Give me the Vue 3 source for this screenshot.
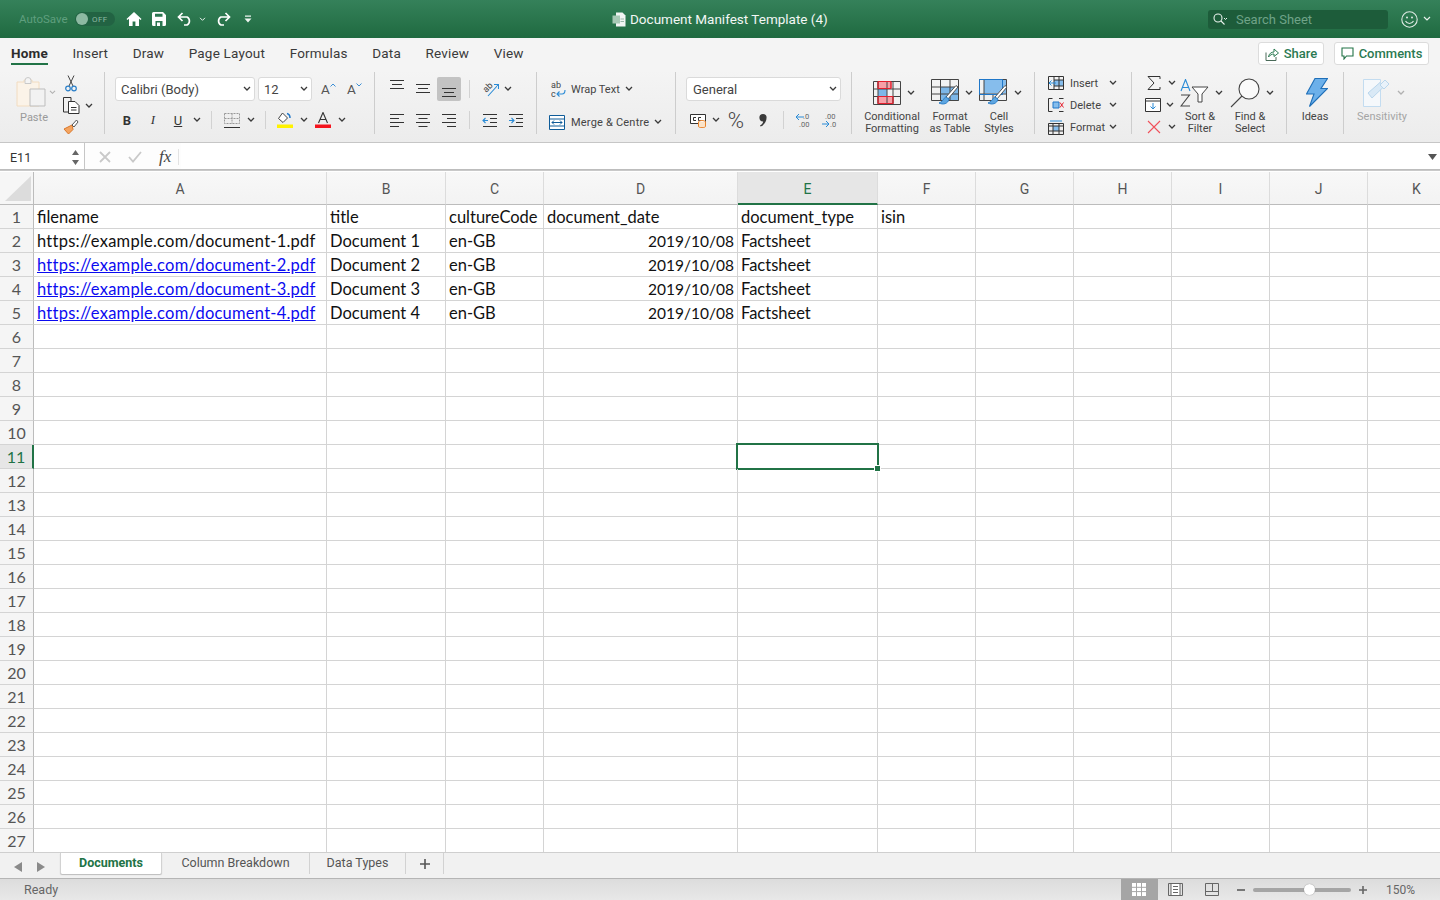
<script setup>
const tabs = ['Home', 'Insert', 'Draw', 'Page Layout', 'Formulas', 'Data', 'Review', 'View']
const columns = ['A', 'B', 'C', 'D', 'E', 'F', 'G', 'H', 'I', 'J', 'K']

const cells = {
  1: ['filename', 'title', 'cultureCode', 'document_date', 'document_type', 'isin'],
  2: ['https://example.com/document-1.pdf', 'Document 1', 'en-GB', '2019/10/08', 'Factsheet'],
  3: ['https://example.com/document-2.pdf', 'Document 2', 'en-GB', '2019/10/08', 'Factsheet'],
  4: ['https://example.com/document-3.pdf', 'Document 3', 'en-GB', '2019/10/08', 'Factsheet'],
  5: ['https://example.com/document-4.pdf', 'Document 4', 'en-GB', '2019/10/08', 'Factsheet']
}
const rows = Array.from({ length: 27 }, (_, i) => i + 1)

const cellClass = (row, col) => ({
  url: col === 0 && row >= 2 && row <= 5,
  link: col === 0 && row >= 3 && row <= 5,
  right: col === 3 && row >= 2 && row <= 5,
  active: row === 11 && col === 4
})
</script>

<template>
  <div class="app">
    <svg width="0" height="0" class="sprite">
      <symbol id="chev" viewBox="0 0 8 6"><path d="M1 1l3 3 3-3" fill="none" stroke="#3a3a3a" stroke-width="1.3" /></symbol>
      <symbol id="chevw" viewBox="0 0 8 6"><path d="M1 1l3 3 3-3" fill="none" stroke="#e8f1ec" stroke-width="1.2" /></symbol>
    </svg>

    <header class="titlebar">
      <div class="quick">
        <span class="autosave">AutoSave</span>
        <span class="toggle"><i></i><b>OFF</b></span>
        <svg width="16" height="16" viewBox="0 0 16 16" class="home"><path d="M8 1L0.5 8l1 1L3 7.8V15h3.6v-4.5h2.8V15H13V7.8L14.500 9l1-1z" fill="#fff" /></svg>
        <svg width="14" height="14" viewBox="0 0 14 14" class="save"><path d="M0 1.500A1.500 1.500 0 0 1 1.500 0H11l3 3v9.500a1.500 1.500 0 0 1-1.500 1.500h-11A1.500 1.500 0 0 1 0 12.500z" fill="#fff" /><path d="M3 1.800h7.500v3H3zM3.500 9h7v5h-7z" fill="#2a7650" /><path d="M5 10.500h3V14H5z" fill="#fff" /></svg>
        <svg width="16" height="14" viewBox="0 0 16 14" class="undo"><path d="M5.500 1L1.500 5l4 4M1.800 5H10a4.500 4.500 0 0 1 0 8H7" fill="none" stroke="#fff" stroke-width="1.700" /></svg>
        <svg width="7" height="5" class="small-chev"><use href="#chevw" /></svg>
        <svg width="16" height="14" viewBox="0 0 16 14" class="redo"><path d="M10.500 1l4 4-4 4M14.200 5H6a4.500 4.500 0 0 0 0 8h3" fill="none" stroke="#fff" stroke-width="1.700" /></svg>
        <svg width="8" height="8" viewBox="0 0 8 8" class="more"><path d="M1 0.500h6v1.200H1zM0.500 3.500h7L4 7.500z" fill="#eef5f1" /></svg>
      </div>
      <div class="doc-title">
        <svg width="14" height="15" viewBox="0 0 14 15"><path d="M4 0.500h6.500L13.500 3.500V14.500H4z" fill="#f2f5f3" /><path d="M0.500 3.500h7.500v8H0.500z" fill="#a7c9b5" /><path d="M8.500 7h3.500M8.500 9.500h3.500" stroke="#9bb8a8" /></svg>
        <span>Document Manifest Template (4)</span>
      </div>
      <div class="search">
        <svg width="15" height="13" viewBox="0 0 15 13"><circle cx="5" cy="5" r="4" fill="none" stroke="#e8f1ec" stroke-width="1.100" /><path d="M8 8l3.500 3.500" stroke="#e8f1ec" stroke-width="1.100" /><path d="M11 5l1.500 1.500L14 5" fill="none" stroke="#e8f1ec" /></svg>
        <span>Search Sheet</span>
      </div>
      <svg width="17" height="17" viewBox="0 0 17 17" class="smile"><circle cx="8.500" cy="8.500" r="7.700" fill="none" stroke="#dfeae4" stroke-width="1.100" /><circle cx="6" cy="6.500" r="1" fill="#dfeae4" /><circle cx="11" cy="6.500" r="1" fill="#dfeae4" /><path d="M4.500 10a4.500 4.500 0 0 0 8 0" fill="none" stroke="#dfeae4" stroke-width="1.100" /></svg>
      <svg width="8" height="6" class="smile-chev"><use href="#chevw" /></svg>
    </header>

    <nav class="tabbar">
      <span v-for="tab in tabs" :key="tab" :class="['tab', { current: tab === 'Home' }]">{{ tab }}</span>
      <div class="tab-actions">
        <button class="action share">
          <svg width="14" height="14" viewBox="0 0 14 14"><path d="M1 5.500v8h10V10" fill="none" stroke="#4a6a58" /><path d="M3.500 10C4 6.500 6.500 5 9 5V2l4.500 4L9 9.500V7C7 7 5 8 3.500 10z" fill="none" stroke="#2b7a52" /></svg>
          Share
        </button>
        <button class="action comments">
          <svg width="13" height="13" viewBox="0 0 13 13"><path d="M1 1h11v8H5.500L3 12V9H1z" fill="none" stroke="#217346" stroke-width="1.100" /></svg>
          Comments
        </button>
      </div>
    </nav>

    <section class="ribbon">
      <!-- clipboard -->
      <div class="group clipboard">
        <div class="paste">
          <div class="paste-top">
            <svg width="30" height="30" viewBox="0 0 30 30">
              <path d="M1 5h7V3h8v2h7v24H1z" fill="#fbf3e8" stroke="#f2dcc0" />
              <path d="M9 3.500a3 3 0 0 1 6 0v3H9z" fill="#f4f4f4" stroke="#c9c9c9" />
              <path d="M14 12h15v17H14z" fill="#f2f2f2" stroke="#bdbdbd" />
            </svg>
            <svg width="7" height="5" class="chev-faded"><use href="#chev" /></svg>
          </div>
          <span class="paste-label">Paste</span>
        </div>
        <div class="clip-tools">
          <svg width="12" height="17" viewBox="0 0 12 17"><path d="M3 0.500L8 11M9 0.500L4 11" stroke="#444" fill="none" /><circle cx="3" cy="13.500" r="2.300" fill="none" stroke="#2a7fc9" stroke-width="1.200" /><circle cx="9" cy="13.500" r="2.300" fill="none" stroke="#2a7fc9" stroke-width="1.200" /></svg>
          <div class="tool-line">
            <svg width="17" height="17" viewBox="0 0 17 17"><path d="M0.500 0.500H8V4M5 15H0.500V0.500" fill="none" stroke="#333" /><path d="M5.500 4.500h6.500l4 4v8h-10.500z" fill="#fff" stroke="#333" /><path d="M8 10.500h5.500M8 13h5.500" stroke="#333" /></svg>
            <svg width="8" height="6" class="chev"><use href="#chev" /></svg>
          </div>
          <svg width="16" height="16" viewBox="0 0 16 16"><path d="M9 6l-8 4 4.500 5 4.500-4.500z" fill="#f4a460" stroke="#d9772a" /><path d="M9 6l2 2 4-5-1.500-2z" fill="#fff" stroke="#555" /></svg>
        </div>
      </div>

      <!-- font -->
      <div class="group rows font">
        <div class="row">
          <div class="select font-name">Calibri (Body)<svg width="8" height="6"><use href="#chev" /></svg></div>
          <div class="select font-size">12<svg width="8" height="6"><use href="#chev" /></svg></div>
          <span class="grow-a">A<svg width="6" height="4" viewBox="0 0 6 4"><path d="M0.500 3.500L3 1l2.500 2.500" fill="none" stroke="#3b8fd6" /></svg></span>
          <span class="grow-a">A<svg width="6" height="4" viewBox="0 0 6 4"><path d="M0.500 0.500L3 3l2.500-2.500" fill="none" stroke="#3b8fd6" /></svg></span>
        </div>
        <div class="row font-tools">
          <span class="fmt bold">B</span>
          <span class="fmt italic">I</span>
          <span class="fmt under">U</span>
          <svg width="8" height="6" class="chev under-chev"><use href="#chev" /></svg>
          <i class="vsep sep-a"></i>
          <svg width="16" height="15" viewBox="0 0 16 15" class="borders"><path d="M0.500 0.500h15v10h-15zM8 0.500v10M0.500 5.500h15" fill="none" stroke="#999" stroke-dasharray="2 1" /><path d="M0 14.500h16" stroke="#333" /></svg>
          <svg width="8" height="6" class="chev borders-chev"><use href="#chev" /></svg>
          <i class="vsep sep-b"></i>
          <svg width="16" height="16" viewBox="0 0 16 16" class="fill"><path d="M5.500 1L1.500 6.500 6 10.500l4.500-4.500z" fill="#fff" stroke="#444" /><path d="M10 1.500c2 .5 3 2 3 4.500" fill="none" stroke="#1f77c9" stroke-width="1.500" /><path d="M0 12.500h16V16H0z" fill="#fff200" /></svg>
          <svg width="8" height="6" class="chev fill-chev"><use href="#chev" /></svg>
          <svg width="16" height="16" viewBox="0 0 16 16" class="colour"><path d="M3.500 11L8 0.500 12.500 11M5 7.500h6" fill="none" stroke="#333" stroke-width="1.100" /><path d="M0 12.500h16V16H0z" fill="#f5141e" /></svg>
          <svg width="8" height="6" class="chev colour-chev"><use href="#chev" /></svg>
        </div>
      </div>

      <!-- alignment -->
      <div class="group rows align">
        <div class="row">
          <span class="al"><svg width="14" height="10" viewBox="0 0 14 10" class="up"><path d="M0 0.500h14M2 4.500h10M0 8.500h14" stroke="#333" /></svg></span>
          <span class="al"><svg width="14" height="10" viewBox="0 0 14 10"><path d="M0 0.500h14M2 4.500h10M0 8.500h14" stroke="#333" /></svg></span>
          <span class="al on"><svg width="14" height="10" viewBox="0 0 14 10" class="down"><path d="M0 0.500h14M2 4.500h10M0 8.500h14" stroke="#333" /></svg></span>
          <i class="vsep al-sep"></i>
          <svg width="17" height="16" viewBox="0 0 17 16" class="orient"><text x="1" y="10" transform="rotate(-45 5 7)" class="svg-ab">ab</text><path d="M6 15L16 4M12 3.500h4.500V8" fill="none" stroke="#2a8bd6" stroke-width="1.100" /></svg>
          <svg width="8" height="6" class="chev orient-chev"><use href="#chev" /></svg>
        </div>
        <div class="row">
          <span class="al"><svg width="14" height="13" viewBox="0 0 14 13"><path d="M0 .5h14M0 4.500h9M0 8.500h14M0 12.500h9" stroke="#333" /></svg></span>
          <span class="al"><svg width="14" height="13" viewBox="0 0 14 13"><path d="M0 .5h14M2.500 4.500h9M0 8.500h14M2.500 12.500h9" stroke="#333" /></svg></span>
          <span class="al"><svg width="14" height="13" viewBox="0 0 14 13"><path d="M0 .5h14M5 4.500h9M0 8.500h14M5 12.500h9" stroke="#333" /></svg></span>
          <i class="vsep al-sep"></i>
          <svg width="15" height="13" viewBox="0 0 15 13" class="indent"><path d="M1 .5h14M8 4.500h7M8 8.500h7M1 12.500h14" stroke="#333" /><path d="M6 6.500H1M3.500 4L1 6.500 3.500 9" fill="none" stroke="#2a8bd6" stroke-width="1.100" /></svg>
          <svg width="15" height="13" viewBox="0 0 15 13" class="indent"><path d="M1 .5h14M8 4.500h7M8 8.500h7M1 12.500h14" stroke="#333" /><path d="M1 6.500h5M3.500 4L6 6.500 3.500 9" fill="none" stroke="#2a8bd6" stroke-width="1.100" /></svg>
        </div>
      </div>

      <!-- wrap -->
      <div class="group rows wrap">
        <div class="row wrap-row">
          <svg width="15" height="17" viewBox="0 0 15 17"><text x="0" y="7" class="svg-ab">ab</text><text x="0" y="15.500" class="svg-ab">c</text><path d="M14 9c0 3-1 4-3 4H6M8.500 10.500L6 13l2.500 2.500" fill="none" stroke="#2a8bd6" stroke-width="1.100" /></svg>
          <span class="wrap-label">Wrap Text</span>
          <svg width="8" height="6" class="chev"><use href="#chev" /></svg>
        </div>
        <div class="row merge-row">
          <svg width="16" height="15" viewBox="0 0 16 15"><path d="M.5.500h15v14H.5z" fill="#fff" stroke="#0f5c99" /><path d="M.5 4h15M.5 11h15" stroke="#0f5c99" /><path d="M3 7.500h10M5 5.500l-2 2 2 2M11 5.500l2 2-2 2" fill="none" stroke="#0f5c99" /></svg>
          <span class="merge-label">Merge &amp; Centre</span>
          <svg width="8" height="6" class="chev"><use href="#chev" /></svg>
        </div>
      </div>

      <!-- number -->
      <div class="group rows number">
        <div class="row">
          <div class="select number-format">General<svg width="8" height="6"><use href="#chev" /></svg></div>
        </div>
        <div class="row number-tools">
          <svg width="16" height="15" viewBox="0 0 16 15" class="currency"><path d="M.5 1.500h15v9H.5z" fill="#fff" stroke="#333" /><path d="M6 4.500H3.500v3H6M11 4.500H8.500v3H11" fill="none" stroke="#333" /><ellipse cx="12" cy="9" rx="3.500" ry="1.500" fill="#fff" stroke="#e9832a" /><path d="M8.500 9v4.500c0 1.500 7 1.500 7 0V9" fill="#fbe3c8" stroke="#e9832a" /></svg>
          <svg width="8" height="6" class="chev cur-chev"><use href="#chev" /></svg>
          <span class="percent">%</span>
          <svg width="8" height="13" viewBox="0 0 8 13" class="comma"><path d="M4 0a3.600 3.600 0 0 1 3.600 3.600c0 4-2.500 7.500-6 9l-.6-1c1.800-1 3-2.500 3.200-4.200A3.500 3.500 0 1 1 4 0z" fill="#3a3a3a" /></svg>
          <i class="vsep num-sep"></i>
          <svg width="16" height="15" viewBox="0 0 16 15" class="dec"><text x="8" y="6" class="svg-dec">.0</text><text x="4" y="13.500" class="svg-dec">.00</text><path d="M9 4H1M4 1L1 4l3 3" fill="none" stroke="#2a8bd6" /></svg>
          <svg width="16" height="15" viewBox="0 0 16 15" class="dec"><text x="4" y="6" class="svg-dec">.00</text><text x="9" y="13.500" class="svg-dec">.0</text><path d="M1 11h7M5 8l3 3-3 3" fill="none" stroke="#2a8bd6" /></svg>
        </div>
      </div>

      <!-- styles -->
      <div class="group styles">
        <div class="big cond">
          <div class="big-top">
            <svg width="28" height="24" viewBox="0 0 28 24">
              <path d="M5 .5h13v7H5z" fill="#f7a0a7" stroke="#e5202e" />
              <path d="M5 8h9v7H5z" fill="#7db7e8" />
              <path d="M5 15.500h15v7H5z" fill="#f7a0a7" stroke="#e5202e" />
              <path d="M.5.500h27v23H.5zM.5 8h27M.5 15.500h27M5 .5v23M14 .5v23M20 .5v23" fill="none" stroke="#444" />
              <path d="M5 .5h13v7H5zM5 15.500h15v7H5z" fill="none" stroke="#e5202e" />
            </svg>
            <svg width="8" height="6"><use href="#chev" /></svg>
          </div>
          <div class="big-label">Conditional<br>Formatting</div>
        </div>
        <div class="big fmt-table">
          <div class="big-top">
            <svg width="28" height="27" viewBox="0 0 28 27">
              <path d="M9 8h19v14H9z" fill="#7db7e8" />
              <path d="M.5.500h27v21H.5zM.5 8h27M.5 15h27M9.500.5v21M19 .5v21" fill="none" stroke="#444" />
              <path d="M27 8L17 20l-2-2L25 6.500z" fill="#fff" stroke="#555" />
              <path d="M15 18c-2 0-2 4-7 6 4 2 9 1 10-4z" fill="#5da5e0" stroke="#2a7fc9" />
            </svg>
            <svg width="8" height="6"><use href="#chev" /></svg>
          </div>
          <div class="big-label">Format<br>as Table</div>
        </div>
        <div class="big cell-styles">
          <div class="big-top">
            <svg width="29" height="27" viewBox="0 0 29 27">
              <path d="M5 .5h23v14H5z" fill="#86bdec" />
              <path d="M.5.500h27v21H.5zM.5 15h27M5 .5v21M14 15v6.500" fill="none" stroke="#444" />
              <path d="M.5.500h23v15H.5z" fill="none" stroke="#1f77c9" />
              <path d="M28 8L18 20l-2-2L26 6.500z" fill="#fff" stroke="#555" />
              <path d="M16 18c-2 0-2 4-7 6 4 2 9 1 10-4z" fill="#5da5e0" stroke="#2a7fc9" />
            </svg>
            <svg width="8" height="6"><use href="#chev" /></svg>
          </div>
          <div class="big-label">Cell<br>Styles</div>
        </div>
      </div>

      <!-- cells -->
      <div class="group cells">
        <div class="cell-line">
          <svg width="16" height="14" viewBox="0 0 16 14"><path d="M6 4h9.500v6H6z" fill="#86bdec" /><path d="M.5.500h15v13H.5zM6 4h9.500M6 10h9.500M6 .5v13M11 .5v13" fill="none" stroke="#333" /><path d="M8 7H1M3.500 4.500L1 7l2.500 2.500" fill="none" stroke="#2a8bd6" /></svg>
          <span>Insert</span>
          <svg width="8" height="6"><use href="#chev" /></svg>
        </div>
        <div class="cell-line">
          <svg width="16" height="14" viewBox="0 0 16 14"><path d="M5 4h6v6H5z" fill="#86bdec" stroke="#1f77c9" /><path d="M.5.500h4M11 .5h4.500M.5 13.500h4M11 13.500h4.500M.5.500v13" fill="none" stroke="#333" /><path d="M12 4.500l3.500 5M15.500 4.500l-3.500 5" stroke="#e5202e" /></svg>
          <span>Delete</span>
          <svg width="8" height="6"><use href="#chev" /></svg>
        </div>
        <div class="cell-line">
          <svg width="16" height="15" viewBox="0 0 16 15"><path d="M5 6h6v5H5z" fill="#86bdec" /><path d="M.5 3.500h15v11H.5zM.5 6h15M.5 11h15M5 3.500v11M11 3.500v11" fill="none" stroke="#333" /><path d="M2 1h12" stroke="#2a8bd6" /></svg>
          <span>Format</span>
          <svg width="8" height="6"><use href="#chev" /></svg>
        </div>
      </div>

      <!-- editing -->
      <div class="group editing">
        <div class="edit-tools">
          <div class="edit-line">
            <svg width="14" height="14" viewBox="0 0 14 14"><path d="M13 3V.5H1L7 7l-6 6.500h12V11" fill="none" stroke="#333" /></svg>
            <svg width="8" height="6"><use href="#chev" /></svg>
          </div>
          <div class="edit-line">
            <svg width="16" height="14" viewBox="0 0 16 14"><path d="M.5.500h15v13H.5z" fill="#fff" stroke="#333" /><path d="M.5 3h15" stroke="#333" /><path d="M8 5v6M5.500 8.500L8 11l2.500-2.500" fill="none" stroke="#2a8bd6" /></svg>
            <svg width="8" height="6"><use href="#chev" /></svg>
          </div>
          <div class="edit-line">
            <svg width="14" height="14" viewBox="0 0 14 14"><path d="M1 1l12 12M13 1L1 13" stroke="#f0505a" stroke-width="1.100" /></svg>
            <svg width="8" height="6"><use href="#chev" /></svg>
          </div>
        </div>
        <div class="big sort">
          <div class="big-top">
            <svg width="29" height="28" viewBox="0 0 29 28">
              <path d="M1 12L5.500.5 10 12M2.500 8.500h6" fill="none" stroke="#2a8bd6" stroke-width="1.100" />
              <path d="M1 16h8.500L1 27h9" fill="none" stroke="#444" stroke-width="1.100" />
              <path d="M12 8h16l-6 7v8h-4v-8z" fill="#fff" stroke="#444" />
            </svg>
            <svg width="8" height="6"><use href="#chev" /></svg>
          </div>
          <div class="big-label">Sort &amp;<br>Filter</div>
        </div>
        <div class="big find">
          <div class="big-top">
            <svg width="30" height="30" viewBox="0 0 30 30">
              <circle cx="19" cy="11" r="10" fill="#fafafa" stroke="#444" stroke-width="1.100" />
              <path d="M12 18L1 29" stroke="#444" stroke-width="1.100" />
            </svg>
            <svg width="8" height="6"><use href="#chev" /></svg>
          </div>
          <div class="big-label">Find &amp;<br>Select</div>
        </div>
      </div>

      <!-- ideas -->
      <div class="group ideas">
        <div class="big">
          <div class="big-top">
            <svg width="22" height="29" viewBox="0 0 22 29"><path d="M9 .5h12.500L15 10.500h6.500L3.500 28.500 8 16H.5z" fill="#6cb0ea" stroke="#1f6fb8" stroke-width="1.100" /></svg>
          </div>
          <div class="big-label">Ideas</div>
        </div>
      </div>

      <!-- sensitivity -->
      <div class="group sensitivity">
        <div class="big">
          <div class="big-top">
            <svg width="28" height="29" viewBox="0 0 28 29">
              <path d="M.5 1.500h17v27H.5z" fill="#f5f8fb" stroke="#c3dcf0" />
              <path d="M5 15L17 4.500l4 4L9 20z" fill="#d9e9f6" stroke="#b9d6ec" />
              <path d="M17 7l5-5 4 4-5 5z" fill="#e9f2fa" stroke="#b9d6ec" />
            </svg>
            <svg width="8" height="6" class="chev-faded"><use href="#chev" /></svg>
          </div>
          <div class="big-label faded">Sensitivity</div>
        </div>
      </div>
    </section>

    <div class="formula-bar">
      <div class="name-box">
        <span>E11</span>
        <svg width="9" height="17" viewBox="0 0 9 17"><path d="M4.500 1L8 6H1zM4.500 16L1 11h7z" fill="#666" /></svg>
      </div>
      <div class="formula-tools">
        <svg width="12" height="12" viewBox="0 0 12 12"><path d="M1 1l10 10M11 1L1 11" stroke="#c9c9c9" stroke-width="1.800" /></svg>
        <svg width="14" height="12" viewBox="0 0 14 12"><path d="M1 6l4 4.500L13 1" fill="none" stroke="#c9c9c9" stroke-width="1.800" /></svg>
        <span class="fx">fx</span>
      </div>
      <div class="formula-input"></div>
      <svg width="9" height="6" viewBox="0 0 9 6" class="formula-drop"><path d="M0 0h9L4.500 6z" fill="#555" /></svg>
    </div>

    <main class="sheet">
      <div class="corner"><i></i></div>
      <div
        v-for="col in columns"
        :key="col"
        :class="['col-head', { selected: col === 'E' }]"
      >{{ col }}</div>
      <template v-for="row in rows" :key="row">
        <div :class="['row-head', { selected: row === 11 }]">{{ row }}</div>
        <div
          v-for="(col, i) in columns"
          :key="col"
          :class="['cell', cellClass(row, i)]"
        >{{ cells[row] ? cells[row][i] : '' }}</div>
      </template>
    </main>

    <div class="sheet-tabs">
      <div class="arrows">
        <svg width="8" height="10" viewBox="0 0 8 10"><path d="M8 0v10L0 5z" fill="#8a8a8a" /></svg>
        <svg width="8" height="10" viewBox="0 0 8 10"><path d="M0 0v10l8-5z" fill="#8a8a8a" /></svg>
      </div>
      <span class="stab current">Documents</span>
      <span class="stab breakdown">Column Breakdown</span>
      <span class="stab types">Data Types</span>
      <span class="stab plus">
        <svg width="10" height="10" viewBox="0 0 10 10"><path d="M5 0v10M0 5h10" stroke="#555" stroke-width="1.600" /></svg>
      </span>
    </div>

    <footer class="status">
      <span class="ready">Ready</span>
      <div class="views">
        <span class="view on"><svg width="14" height="13" viewBox="0 0 14 13"><path d="M0 0h14v13H0z" fill="#fff" /><path d="M4.500 0v13M9.500 0v13M0 4.300h14M0 8.600h14" stroke="#a5a5a5" /></svg></span>
        <span class="view"><svg width="15" height="13" viewBox="0 0 15 13"><path d="M.5.500h14v12H.5z" fill="none" stroke="#666" /><path d="M3 .5h9v12H3z" fill="#fff" stroke="#666" /><path d="M5 3.500h5M5 6.500h5M5 9.500h5" stroke="#666" /></svg></span>
        <span class="view"><svg width="14" height="13" viewBox="0 0 14 13"><path d="M.5.500h13v12H.5zM.5 8.500h13M7.500.5v8" fill="none" stroke="#666" /></svg></span>
      </div>
      <svg width="8" height="2" class="zoom-minus"><path d="M0 1h8" stroke="#777" stroke-width="2" /></svg>
      <div class="slider"><i></i></div>
      <svg width="8" height="8" class="zoom-plus"><path d="M4 0v8M0 4h8" stroke="#666" stroke-width="1.600" /></svg>
      <span class="zoom-val">150%</span>
    </footer>
  </div>
</template>

<style>
html, body {
  margin: 0;
  background: #fff;
  overflow: hidden;
}
</style>

<style scoped>
.app {
  width: 1440px;
  height: 900px;
  overflow: hidden;
  display: flex;
  flex-direction: column;
  font-family: Roboto, "Liberation Sans", sans-serif;
  color: #333;
}
.sprite {
  position: absolute;
}
svg {
  display: block;
  flex: none;
}
.svg-ab {
  font: 9px Roboto, sans-serif;
  fill: #444;
}
.svg-dec {
  font: 7.500px Roboto, sans-serif;
  fill: #666;
}

/* title bar */
.titlebar {
  height: 38px;
  flex: none;
  display: flex;
  align-items: center;
  background: linear-gradient(#35815a, #1f6a40);
  color: #fff;
  position: relative;
}
.quick {
  display: flex;
  align-items: center;
  padding-left: 19px;
}
.autosave {
  font-size: 11.5px;
  color: #5f9f7e;
  width: 56px;
}
.toggle {
  width: 40px;
  height: 14px;
  border-radius: 7px;
  background: #226343;
  display: flex;
  align-items: center;
  gap: 4px;
}
.toggle i {
  width: 12px;
  height: 12px;
  border-radius: 50%;
  background: #8db9a2;
  margin-left: 1px;
}
.toggle b {
  font-size: 8px;
  font-weight: 400;
  color: #8db9a2;
  letter-spacing: 0.4px;
}
.home { margin-left: 11px; }
.save { margin-left: 10px; }
.undo { margin-left: 11px; }
.small-chev { margin-left: 6px; }
.redo { margin-left: 9px; }
.more { margin-left: 13px; }
.doc-title {
  position: absolute;
  left: 612px;
  top: 11px;
  display: flex;
  align-items: center;
  gap: 4px;
  font-size: 13.500px;
  color: #f2f7f4;
}
.search {
  margin-left: auto;
  width: 180px;
  height: 19px;
  background: #1d5c3a;
  border-radius: 3px;
  display: flex;
  align-items: center;
  gap: 8px;
  padding-left: 5px;
  box-sizing: border-box;
  font-size: 13px;
  color: #6fa388;
}
.smile { margin-left: 13px; }
.smile-chev { margin: 0 9px 0 5px; }

/* tabs */
.tabbar {
  height: 32px;
  flex: none;
  background: #f4f4f4;
  display: flex;
  align-items: center;
  padding-left: 11px;
  gap: 24.500px;
  font-size: 13.500px;
  letter-spacing: 0.2px;
  position: relative;
}
.tab {
  color: #3a3a3a;
  align-self: flex-start;
  height: 21px;
  line-height: 22px;
  margin-top: 4px;
  border-bottom: 2px solid transparent;
}
.tab.current {
  font-weight: 700;
  color: #2c2c2c;
  border-color: #217346;
}
.tab-actions {
  margin: -1px 0 0 auto;
  display: flex;
  gap: 10px;
  padding-right: 11px;
}
.action {
  height: 23px;
  box-sizing: border-box;
  background: #fff;
  border: 1px solid #dcdcdc;
  border-radius: 3px;
  display: flex;
  align-items: center;
  justify-content: center;
  gap: 5px;
  font: 500 13px Roboto, sans-serif;
  color: #2b7a52;
  padding: 0;
}
.share { width: 66px; }
.comments { width: 95px; }

/* ribbon */
.ribbon {
  height: 73px;
  flex: none;
  box-sizing: border-box;
  background: linear-gradient(#f4f4f4, #ececec);
  border-bottom: 1px solid #c6c6c6;
  display: flex;
  padding-top: 2px;
  font-size: 11px;
  color: #444;
}
.group {
  height: 62px;
  box-sizing: border-box;
  border-right: 1px solid #cdcdcd;
  flex: none;
}
.rows {
  display: flex;
  flex-direction: column;
  gap: 7px;
  padding-top: 5px;
}
.row {
  height: 24px;
  display: flex;
  align-items: center;
}
.chev { margin-left: 5px; }
.chev-faded { opacity: 0.35; }

.clipboard {
  width: 105px;
  display: flex;
  padding-left: 16px;
}
.paste {
  width: 47px;
  display: flex;
  flex-direction: column;
}
.paste-top {
  display: flex;
  align-items: center;
  gap: 3px;
  margin-top: 5px;
  height: 30px;
}
.paste-label {
  width: 36px;
  text-align: center;
  color: #9a9a9a;
  margin-top: 4px;
  line-height: 13px;
}
.clip-tools {
  display: flex;
  flex-direction: column;
  gap: 5px;
  padding-top: 3px;
}
.tool-line {
  display: flex;
  align-items: center;
}
.clip-tools > svg:first-child { margin-left: 2px; }

.font {
  width: 270px;
  padding-left: 10px;
}
.select {
  height: 24px;
  box-sizing: border-box;
  background: #fff;
  border: 1px solid #dadada;
  border-radius: 3px;
  display: flex;
  align-items: center;
  justify-content: space-between;
  padding: 0 3px 0 5px;
  font-size: 13px;
  color: #444;
}
.font-name { width: 140px; }
.font-size { width: 54px; margin-left: 3px; }
.grow-a {
  display: flex;
  align-items: flex-start;
  width: 26px;
  font-size: 13.500px;
  color: #555;
}
.font-size + .grow-a { margin-left: 9px; }
.grow-a svg { margin-top: 2px; }
.font-tools { padding-left: 7px; }
.fmt {
  font: 13px "Liberation Serif", serif;
  color: #333;
  width: 10px;
  text-align: center;
}
.bold { font: 700 13px Roboto, sans-serif; }
.italic { margin-left: 16px; font-style: italic; }
.under {
  font: 13px Roboto, sans-serif;
  text-decoration: underline;
  margin-left: 15px;
}
.under-chev { margin-left: 10px; }
.vsep {
  width: 1px;
  height: 18px;
  background: #d2d2d2;
  flex: none;
}
.sep-a { margin-left: 10px; }
.borders { margin-left: 12px; }
.borders-chev { margin-left: 7px; }
.sep-b { margin-left: 10px; }
.fill { margin-left: 11px; }
.fill-chev { margin-left: 7px; }
.colour { margin-left: 7px; }
.colour-chev { margin-left: 7px; }

.align {
  width: 162px;
  padding-left: 10px;
}
.al {
  width: 24px;
  height: 24px;
  margin-right: 2px;
  border-radius: 2px;
  display: flex;
  align-items: center;
  justify-content: center;
}
.al.on { background: #c3c3c3; }
.up { margin-bottom: 8px; }
.down { margin-top: 8px; }
.al-sep { margin-left: 6px; }
.orient { margin-left: 12px; }
.orient-chev { margin-left: 5px; }
.indent { margin-left: 12px; margin-right: -1px; }
.indent + .indent { margin-left: 12px; }

.wrap { width: 139px; }
.wrap-row { padding-left: 14px; }
.wrap-label { margin-left: 5px; }
.merge-row { padding: 2px 0 0 12px; }
.merge-label { margin-left: 6px; letter-spacing: 0.2px; }

.number {
  width: 176px;
  padding-left: 10px;
}
.number-format { width: 155px; padding-left: 6px; }
.number-tools { padding-left: 4px; }
.cur-chev { margin-left: 6px; }
.percent {
  font-size: 22px;
  font-weight: 300;
  color: #444;
  margin-left: 7px;
  width: 18px;
  text-align: center;
}
.comma { margin-left: 14px; }
.num-sep { margin-left: 16px; }
.dec { margin-left: 11px; }
.dec + .dec { margin-left: 10px; }

.big {
  display: flex;
  flex-direction: column;
  align-items: center;
  flex: none;
}
.big-top {
  height: 39px;
  flex: none;
  display: flex;
  align-items: center;
  justify-content: center;
  gap: 6px;
  padding: 2px 0 0 3px;
  box-sizing: border-box;
  align-self: stretch;
}
.big-label {
  text-align: center;
  line-height: 12px;
  font-size: 11px;
  color: #444;
  white-space: nowrap;
}
.big-label.faded { color: #a5a5a5; }

.styles {
  width: 183px;
  display: flex;
  padding-left: 10px;
}
.cond { width: 60px; }
.fmt-table { width: 50px; margin-left: 3px; }
.cell-styles { width: 46px; margin-left: 1px; }

.cells {
  width: 97px;
  padding: 0 0 0 13px;
  display: flex;
  flex-direction: column;
}
.cell-line {
  height: 22px;
  flex: none;
  display: flex;
  align-items: center;
  font-size: 11px;
}
.cell-line span { margin-left: 6px; width: 39px; }

.editing {
  width: 155px;
  display: flex;
  padding-left: 13px;
}
.edit-tools {
  width: 33px;
  display: flex;
  flex-direction: column;
}
.edit-line {
  height: 22px;
  flex: none;
  display: flex;
  align-items: center;
  gap: 5px;
}
.edit-line:first-child svg:first-child,
.edit-line:last-child svg:first-child {
  margin: 0 2px;
}
.sort { width: 44px; }
.find { width: 50px; margin-left: 3px; }
.ideas {
  width: 57px;
  display: flex;
  justify-content: center;
}
.ideas .big { width: 40px; }
.sensitivity {
  border-right: 0;
  padding-left: 13px;
  flex: 1;
}
.sensitivity .big { width: 50px; }

/* formula bar */
.formula-bar {
  height: 27px;
  flex: none;
  background: #fff;
  display: flex;
  align-items: center;
  border-bottom: 1px solid #bdbdbd;
  box-sizing: border-box;
}
.name-box {
  width: 85px;
  height: 26px;
  box-sizing: border-box;
  border-right: 1px solid #c6c6c6;
  display: flex;
  align-items: center;
  justify-content: space-between;
  padding: 2px 4px 0 10px;
  font-size: 12.500px;
  color: #333;
}
.formula-tools {
  display: flex;
  align-items: center;
  width: 96px;
  height: 26px;
  padding: 2px 0 0 14px;
  box-sizing: border-box;
  gap: 17px;
  background: #fdfdfd;
}
.fx {
  font: italic 17px "Liberation Serif", serif;
  color: #444;
  border-right: 1px solid #e3e3e3;
  padding-right: 7px;
  line-height: 16px;
}
.formula-input { flex: 1; }
.formula-drop { margin: 1px 3px 0 0; }

/* sheet */
.sheet {
  height: 682px;
  flex: none;
  box-sizing: border-box;
  padding-top: 1px;
  border-top: 1px solid #c9c9c9;
  overflow: hidden;
  display: grid;
  grid-template-columns: 34px 293px 119px 98px 194px 140px 98px 98px 98px 98px 98px 98px;
  grid-template-rows: 33px repeat(27, 24px);
  font-family: Lato, sans-serif;
  font-size: 16.500px;
  color: #111;
}
.corner {
  border-right: 1px solid #bcbcbc;
  border-bottom: 1px solid #bcbcbc;
  background: #f6f6f6;
  position: relative;
}
.corner i {
  position: absolute;
  left: 5px;
  bottom: 3px;
  border-left: 26px solid transparent;
  border-bottom: 25px solid #dcdcdc;
}
.col-head {
  background: linear-gradient(#f8f8f8, #f3f3f3);
  border-right: 1px solid #dcdcdc;
  border-bottom: 1px solid #bcbcbc;
  display: flex;
  align-items: center;
  justify-content: center;
  padding-top: 2px;
  box-sizing: border-box;
  font: 14px Roboto, sans-serif;
  color: #555;
}
.col-head.selected {
  background: #e6e6e6;
  color: #217346;
  border-bottom: 2px solid #217346;
}
.row-head {
  background: #f5f5f5;
  border-right: 1px solid #bcbcbc;
  border-bottom: 1px solid #d4d4d4;
  display: flex;
  align-items: flex-end;
  justify-content: center;
  line-height: 23px;
  font-size: 16px;
  color: #555;
}
.row-head.selected {
  background: #e6e6e6;
  color: #217346;
  border-right: 2px solid #217346;
}
.cell {
  border-right: 1px solid #d4d4d4;
  border-bottom: 1px solid #d4d4d4;
  padding: 0 3px;
  line-height: 24px;
  white-space: nowrap;
  position: relative;
}
.cell.url { letter-spacing: 0.24px; }
.cell.link {
  color: #0b0bf0;
  text-decoration: underline;
}
.cell.right {
  text-align: right;
  font-size: 15.500px;
}
.cell.active::after {
  content: "";
  position: absolute;
  left: -2px;
  top: -2px;
  right: -2px;
  bottom: -2px;
  border: 2px solid #217346;
  box-sizing: border-box;
}
.cell.active::before {
  content: "";
  position: absolute;
  right: -3px;
  bottom: -3px;
  width: 5px;
  height: 5px;
  background: #217346;
  outline: 1px solid #fff;
  z-index: 1;
}

/* sheet tabs */
.sheet-tabs {
  height: 26px;
  flex: none;
  background: #f1f1f1;
  border-top: 1px solid #cfcfcf;
  box-sizing: border-box;
  display: flex;
  font-size: 12.500px;
  color: #555;
}
.arrows {
  width: 61px;
  display: flex;
  align-items: center;
  gap: 15px;
  padding: 2px 0 0 14px;
  box-sizing: border-box;
}
.stab {
  height: 21px;
  line-height: 19px;
  text-align: center;
  border-right: 1px solid #d2d2d2;
  box-sizing: content-box;
}
.stab.current {
  width: 100px;
  background: #fff;
  color: #217346;
  font-weight: 700;
  border-radius: 0 0 2px 2px;
  box-shadow: 0 1px 1px #bcbcbc;
  border-left: 1px solid #d2d2d2;
  margin-left: -1px;
}
.breakdown { width: 147px; }
.types { width: 95px; }
.plus {
  width: 37px;
  display: flex;
  align-items: center;
  justify-content: center;
}

/* status bar */
.status {
  height: 22px;
  flex: none;
  box-sizing: border-box;
  background: linear-gradient(#dcdcdc, #e8e8e8);
  border-top: 1px solid #b5b5b5;
  display: flex;
  align-items: center;
  font-size: 12.500px;
  color: #666;
}
.ready { margin-left: 24px; }
.views {
  margin-left: auto;
  display: flex;
  align-self: stretch;
}
.view {
  width: 36px;
  display: flex;
  align-items: center;
  justify-content: center;
}
.view.on {
  width: 37px;
  background: #a5a5a5;
}
.zoom-minus { margin-left: 7px; }
.slider {
  width: 98px;
  height: 4px;
  margin-left: 8px;
  border-radius: 2px;
  background: #a5a5a5;
  position: relative;
}
.slider i {
  position: absolute;
  left: 51px;
  top: -4px;
  width: 11px;
  height: 11px;
  border-radius: 50%;
  background: #fff;
  box-shadow: 0 0 1px #777;
}
.zoom-plus { margin-left: 8px; }
.zoom-val {
  margin: 0 25px 0 19px;
  font-size: 12px;
}
</style>
